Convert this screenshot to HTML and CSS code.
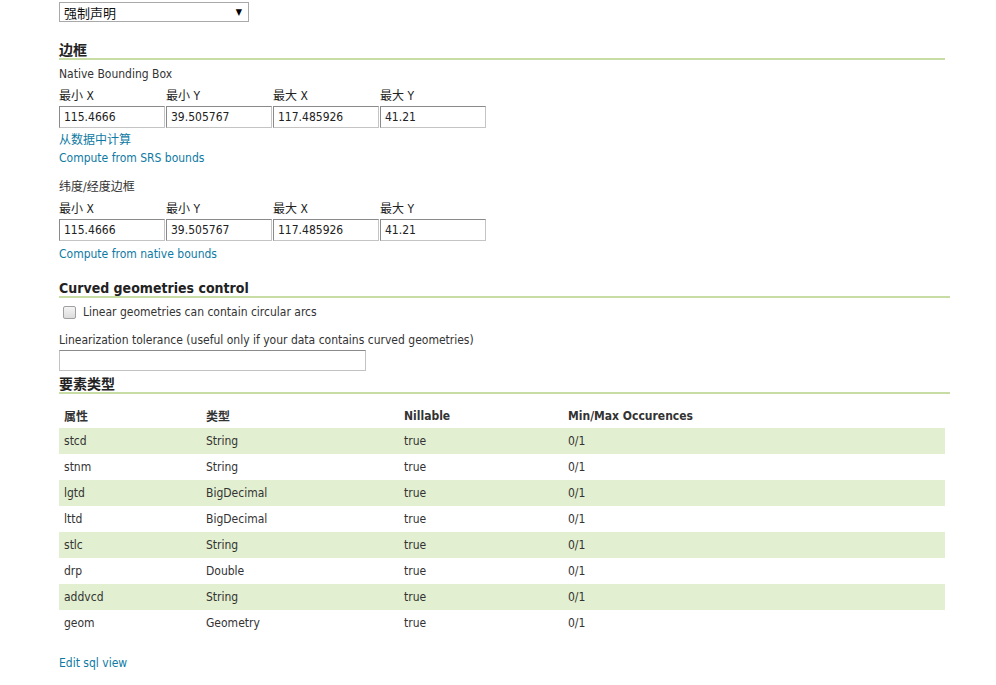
FILE: index.html
```html
<!DOCTYPE html>
<html>
<head>
<meta charset="utf-8">
<link rel="stylesheet" href="styles.css">
</head>
<body>
<div class="page">
  <div class="select"><span>强制声明</span><span class="arrow">▼</span></div>

  <h3 class="heading h-bbox">边框</h3>
  <div class="sub">Native Bounding Box</div>
  <div class="bbox">
    <div class="cell"><label>最小 X</label><div class="inp">115.4666</div></div>
    <div class="cell"><label>最小 Y</label><div class="inp">39.505767</div></div>
    <div class="cell"><label>最大 X</label><div class="inp">117.485926</div></div>
    <div class="cell"><label>最大 Y</label><div class="inp">41.21</div></div>
  </div>
  <a class="link l1">从数据中计算</a>
  <a class="link l2">Compute from SRS bounds</a>

  <div class="sub sub2">纬度/经度边框</div>
  <div class="bbox">
    <div class="cell"><label>最小 X</label><div class="inp">115.4666</div></div>
    <div class="cell"><label>最小 Y</label><div class="inp">39.505767</div></div>
    <div class="cell"><label>最大 X</label><div class="inp">117.485926</div></div>
    <div class="cell"><label>最大 Y</label><div class="inp">41.21</div></div>
  </div>
  <a class="link l3">Compute from native bounds</a>

  <h3 class="heading h-curved">Curved geometries control</h3>
  <div class="check"><span class="box"></span><span>Linear geometries can contain circular arcs</span></div>
  <div class="sub tol">Linearization tolerance (useful only if your data contains curved geometries)</div>
  <div class="wide-inp"></div>

  <h3 class="heading h-ft">要素类型</h3>
  <table class="attrs">
    <thead>
      <tr><th class="c1">属性</th><th class="c2">类型</th><th class="c3">Nillable</th><th class="c4">Min/Max Occurences</th></tr>
    </thead>
    <tbody>
      <tr class="odd"><td>stcd</td><td>String</td><td>true</td><td>0/1</td></tr>
      <tr><td>stnm</td><td>String</td><td>true</td><td>0/1</td></tr>
      <tr class="odd"><td>lgtd</td><td>BigDecimal</td><td>true</td><td>0/1</td></tr>
      <tr><td>lttd</td><td>BigDecimal</td><td>true</td><td>0/1</td></tr>
      <tr class="odd"><td>stlc</td><td>String</td><td>true</td><td>0/1</td></tr>
      <tr><td>drp</td><td>Double</td><td>true</td><td>0/1</td></tr>
      <tr class="odd"><td>addvcd</td><td>String</td><td>true</td><td>0/1</td></tr>
      <tr><td>geom</td><td>Geometry</td><td>true</td><td>0/1</td></tr>
    </tbody>
  </table>
  <a class="link l4">Edit sql view</a>
</div>
</body>
</html>
```

FILE: styles.css
```css
html, body {
  margin: 0;
  padding: 0;
  background: #fff;
}
body {
  font-family: "DejaVu Sans Condensed", "DejaVu Sans", "Noto Sans CJK SC", sans-serif;
  font-stretch: condensed;
  font-size: 12px;
  color: #333;
}
.page {
  padding: 2px 0 0 59px;
  width: 891px;
}
.select {
  height: 18px;
  border: 1px solid #a9a9a9;
  display: flex;
  align-items: center;
  justify-content: space-between;
  padding: 0 0 0 4px;
  width: 184px;
  font-size: 13px;
  color: #111;
}
.select .arrow {
  font-size: 9px;
  margin-right: 6px;
  color: #000;
}
.heading {
  margin: 0;
  font-size: 14px;
  font-weight: bold;
  color: #222;
  border-bottom: 2px solid #c8dda4;
  line-height: 16px;
  padding-bottom: 0;
}
.h-bbox {
  margin-top: 20px;
  width: 886px;
}
.sub {
  margin-top: 6px;
  line-height: 16px;
  color: #333;
}
.bbox {
  display: flex;
  margin-top: 6px;
}
.cell {
  width: 107px;
  display: flex;
  flex-direction: column;
}
.cell label {
  line-height: 16px;
  height: 16px;
  margin-bottom: 2px;
  color: #222;
}
.inp {
  width: 100px;
  height: 20px;
  border: 1px solid #c4c4c4;
  border-top-color: #8a8a8a;
  border-left-color: #8a8a8a;
  padding-left: 4px;
  line-height: 20px;
  color: #222;
}
.link {
  display: block;
  color: #0e7aa3;
  line-height: 18px;
  text-decoration: none;
}
.l1 { margin-top: 3px; }
.l2 { margin-top: 0; }
.sub2 { margin-top: 12px; }
.l3 { margin-top: 4px; }
.h-curved {
  margin-top: 17px;
  width: 891px;
}
.check {
  display: flex;
  align-items: center;
  margin-top: 5px;
  line-height: 18px;
}
.box {
  width: 11px;
  height: 11px;
  border: 1px solid #a0a0a0;
  border-radius: 2px;
  background: linear-gradient(#f4f4f4, #dcdcdc);
  margin: 0 7px 0 4px;
}
.tol {
  margin-top: 11px;
}
.wide-inp {
  width: 305px;
  height: 19px;
  border: 1px solid #c2c2c2;
  border-top-color: #8a8a8a;
  margin-top: 2px;
}
.h-ft {
  margin-top: 5px;
  width: 891px;
}
.attrs {
  width: 886px;
  border-collapse: collapse;
  margin-top: 9px;
}
.attrs th, .attrs td {
  text-align: left;
  padding: 0 0 0 5px;
  height: 26px;
  vertical-align: middle;
}
.attrs th {
  font-weight: bold;
  height: 25px;
  color: #333;
}
.attrs td { color: #333; }
.attrs .c1 { width: 137px; }
.attrs .c2 { width: 193px; }
.attrs .c3 { width: 159px; }
.attrs tr.odd td { background: #e2efd0; }
.l4 { margin-top: 18px; }
```
